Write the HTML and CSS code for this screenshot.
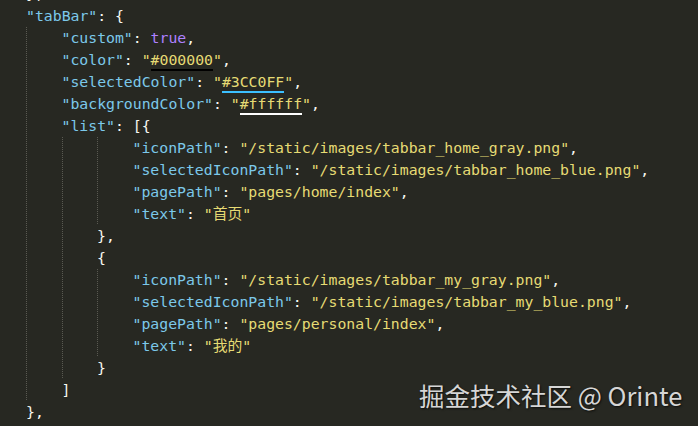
FILE: index.html
```html
<!DOCTYPE html>
<html>
<head>
<meta charset="utf-8">
<link rel="stylesheet" href="styles.css">
</head>
<body>
<div class="editor">
  <div class="line">},</div>
  <div class="line"><span class="k">"tabBar"</span><span class="p">: {</span></div>
  <div class="block">
    <div class="line"><span class="k">"custom"</span><span class="p">: </span><span class="b">true</span><span class="p">,</span></div>
    <div class="line"><span class="k">"color"</span><span class="p">: </span><span class="s">"<u class="ul ul-black">#000000</u>"</span><span class="p">,</span></div>
    <div class="line"><span class="k">"selectedColor"</span><span class="p">: </span><span class="s">"<u class="ul ul-blue">#3CC0FF</u>"</span><span class="p">,</span></div>
    <div class="line"><span class="k">"backgroundColor"</span><span class="p">: </span><span class="s">"<u class="ul ul-white">#ffffff</u>"</span><span class="p">,</span></div>
    <div class="line"><span class="k">"list"</span><span class="p">: [{</span></div>
    <div class="block">
      <div class="block">
        <div class="line"><span class="k">"iconPath"</span><span class="p">: </span><span class="s">"/static/images/tabbar_home_gray.png"</span><span class="p">,</span></div>
        <div class="line"><span class="k">"selectedIconPath"</span><span class="p">: </span><span class="s">"/static/images/tabbar_home_blue.png"</span><span class="p">,</span></div>
        <div class="line"><span class="k">"pagePath"</span><span class="p">: </span><span class="s">"pages/home/index"</span><span class="p">,</span></div>
        <div class="line"><span class="k">"text"</span><span class="p">: </span><span class="s">"首页"</span></div>
      </div>
      <div class="line"><span class="p">},</span></div>
      <div class="line"><span class="p">{</span></div>
      <div class="block">
        <div class="line"><span class="k">"iconPath"</span><span class="p">: </span><span class="s">"/static/images/tabbar_my_gray.png"</span><span class="p">,</span></div>
        <div class="line"><span class="k">"selectedIconPath"</span><span class="p">: </span><span class="s">"/static/images/tabbar_my_blue.png"</span><span class="p">,</span></div>
        <div class="line"><span class="k">"pagePath"</span><span class="p">: </span><span class="s">"pages/personal/index"</span><span class="p">,</span></div>
        <div class="line"><span class="k">"text"</span><span class="p">: </span><span class="s">"我的"</span></div>
      </div>
      <div class="line"><span class="p">}</span></div>
    </div>
    <div class="line"><span class="p">]</span></div>
  </div>
  <div class="line"><span class="p">},</span></div>
</div>
<div class="watermark">掘金技术社区 @ Orinte</div>
</body>
</html>
```
FILE: styles.css
```css
html, body {
  margin: 0;
  padding: 0;
  background: #272822;
  height: 100%;
  overflow: hidden;
}
body {
  position: relative;
}
.editor {
  margin-top: -17px;
  padding-left: 26px;
  font-family: "DejaVu Sans Mono", "Liberation Mono", "Noto Sans CJK SC", monospace;
  font-size: 14.8px;
  color: #f8f8f2;
}
.line {
  height: 22px;
  line-height: 22px;
  white-space: pre;
}
.block {
  padding-left: 35.5px;
  background-image: linear-gradient(to bottom, #5a5a52 50%, transparent 50%);
  background-size: 1px 2px;
  background-repeat: repeat-y;
  background-position: 0 0;
}
.k { color: #7cc8ea; }
.s { color: #e6db74; }
.b { color: #ae81ff; }
.p { color: #f8f8f2; }
.ul {
  text-decoration: none;
  border-bottom: 2px solid;
  padding-bottom: 1px;
}
.ul-black { border-color: #000000; }
.ul-blue { border-color: #3cc0ff; }
.ul-white { border-color: #ffffff; }
.watermark {
  position: absolute;
  left: 419px;
  top: 377px;
  font-family: "Noto Sans CJK SC", "Open Sans", sans-serif;
  font-size: 25.5px;
  line-height: 36px;
  color: #d6d6d6;
  text-shadow: 1px 1px 2px rgba(0,0,0,0.7);
}
```
